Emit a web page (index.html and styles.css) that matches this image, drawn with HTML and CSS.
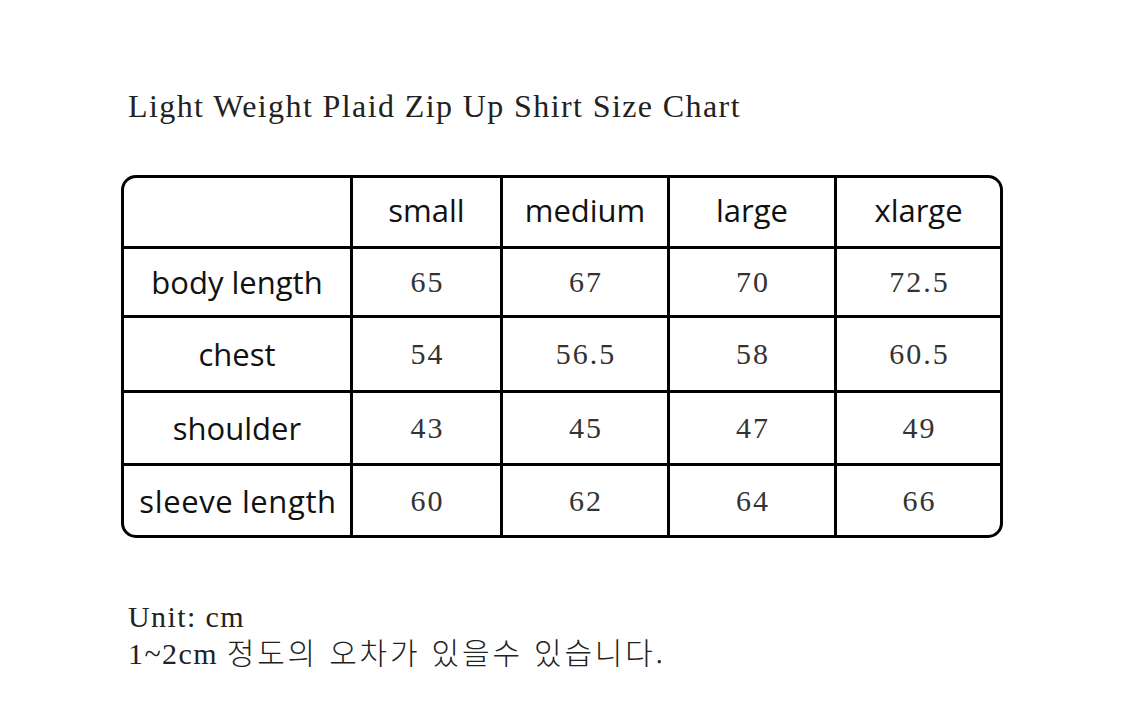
FILE: index.html
```html
<!DOCTYPE html>
<html lang="ko">
<head>
<meta charset="utf-8">
<title>Light Weight Plaid Zip Up Shirt Size Chart</title>
<link rel="stylesheet" href="styles.css">
</head>
<body>
<main class="page">
  <h1 class="title">Light Weight Plaid Zip Up Shirt Size Chart</h1>
  <div class="chart">
    <div class="cell corner-tl"></div>
    <div class="cell head">small</div>
    <div class="cell head">medium</div>
    <div class="cell head">large</div>
    <div class="cell head corner-tr">xlarge</div>

    <div class="cell label">body length</div>
    <div class="cell num">65</div>
    <div class="cell num">67</div>
    <div class="cell num">70</div>
    <div class="cell num">72.5</div>

    <div class="cell label">chest</div>
    <div class="cell num">54</div>
    <div class="cell num">56.5</div>
    <div class="cell num">58</div>
    <div class="cell num">60.5</div>

    <div class="cell label">shoulder</div>
    <div class="cell num">43</div>
    <div class="cell num">45</div>
    <div class="cell num">47</div>
    <div class="cell num">49</div>

    <div class="cell label wide corner-bl">sleeve length</div>
    <div class="cell num">60</div>
    <div class="cell num">62</div>
    <div class="cell num">64</div>
    <div class="cell num corner-br">66</div>
  </div>
  <div class="notes">
    <p class="note">Unit: cm</p>
    <p class="note">1~2cm <span class="ko">정도의 오차가 있을수 있습니다.</span></p>
  </div>
</main>
</body>
</html>
```

FILE: styles.css
```css
html, body {
  margin: 0;
  padding: 0;
  background: #ffffff;
}

.page {
  padding: 86px 0 0 121px;
}

.title {
  margin: 0 0 49px 0;
  padding-left: 7px;
  font-family: "Liberation Serif", "Noto Sans CJK KR", serif;
  font-weight: normal;
  font-size: 32px;
  line-height: 40px;
  letter-spacing: 1.4px;
  color: #222222;
}

.chart {
  display: grid;
  grid-template-columns: 226px 147px 164px 164px 163px;
  grid-template-rows: 68px 66px 72px 70px 69px;
  gap: 3px;
  padding: 3px;
  width: fit-content;
  background: #000000;
  border-radius: 15px;
}

.cell {
  display: flex;
  align-items: center;
  justify-content: center;
  background: #ffffff;
}

.corner-tl { border-top-left-radius: 12px; }
.corner-tr { border-top-right-radius: 12px; }
.corner-bl { border-bottom-left-radius: 12px; }
.corner-br { border-bottom-right-radius: 12px; }

.head,
.label {
  font-family: "Open Sans", "Noto Sans", sans-serif;
  font-size: 31px;
  color: #111111;
}

.head {
  padding-bottom: 4px;
}

.wide {
  letter-spacing: 0.6px;
  padding-left: 2px;
}

.num {
  font-family: "Liberation Serif", serif;
  font-size: 30px;
  letter-spacing: 2px;
  padding-left: 2px;
  color: #333333;
}

.notes {
  margin-top: 61px;
  padding-left: 7px;
}

.note {
  margin: 0;
  font-family: "Liberation Serif", "Noto Sans CJK KR", serif;
  font-size: 30px;
  line-height: 35px;
  letter-spacing: 1.4px;
  color: #222222;
}

.ko {
  font-family: "Noto Sans CJK KR", sans-serif;
  font-weight: 300;
  letter-spacing: 2.8px;
}
```
